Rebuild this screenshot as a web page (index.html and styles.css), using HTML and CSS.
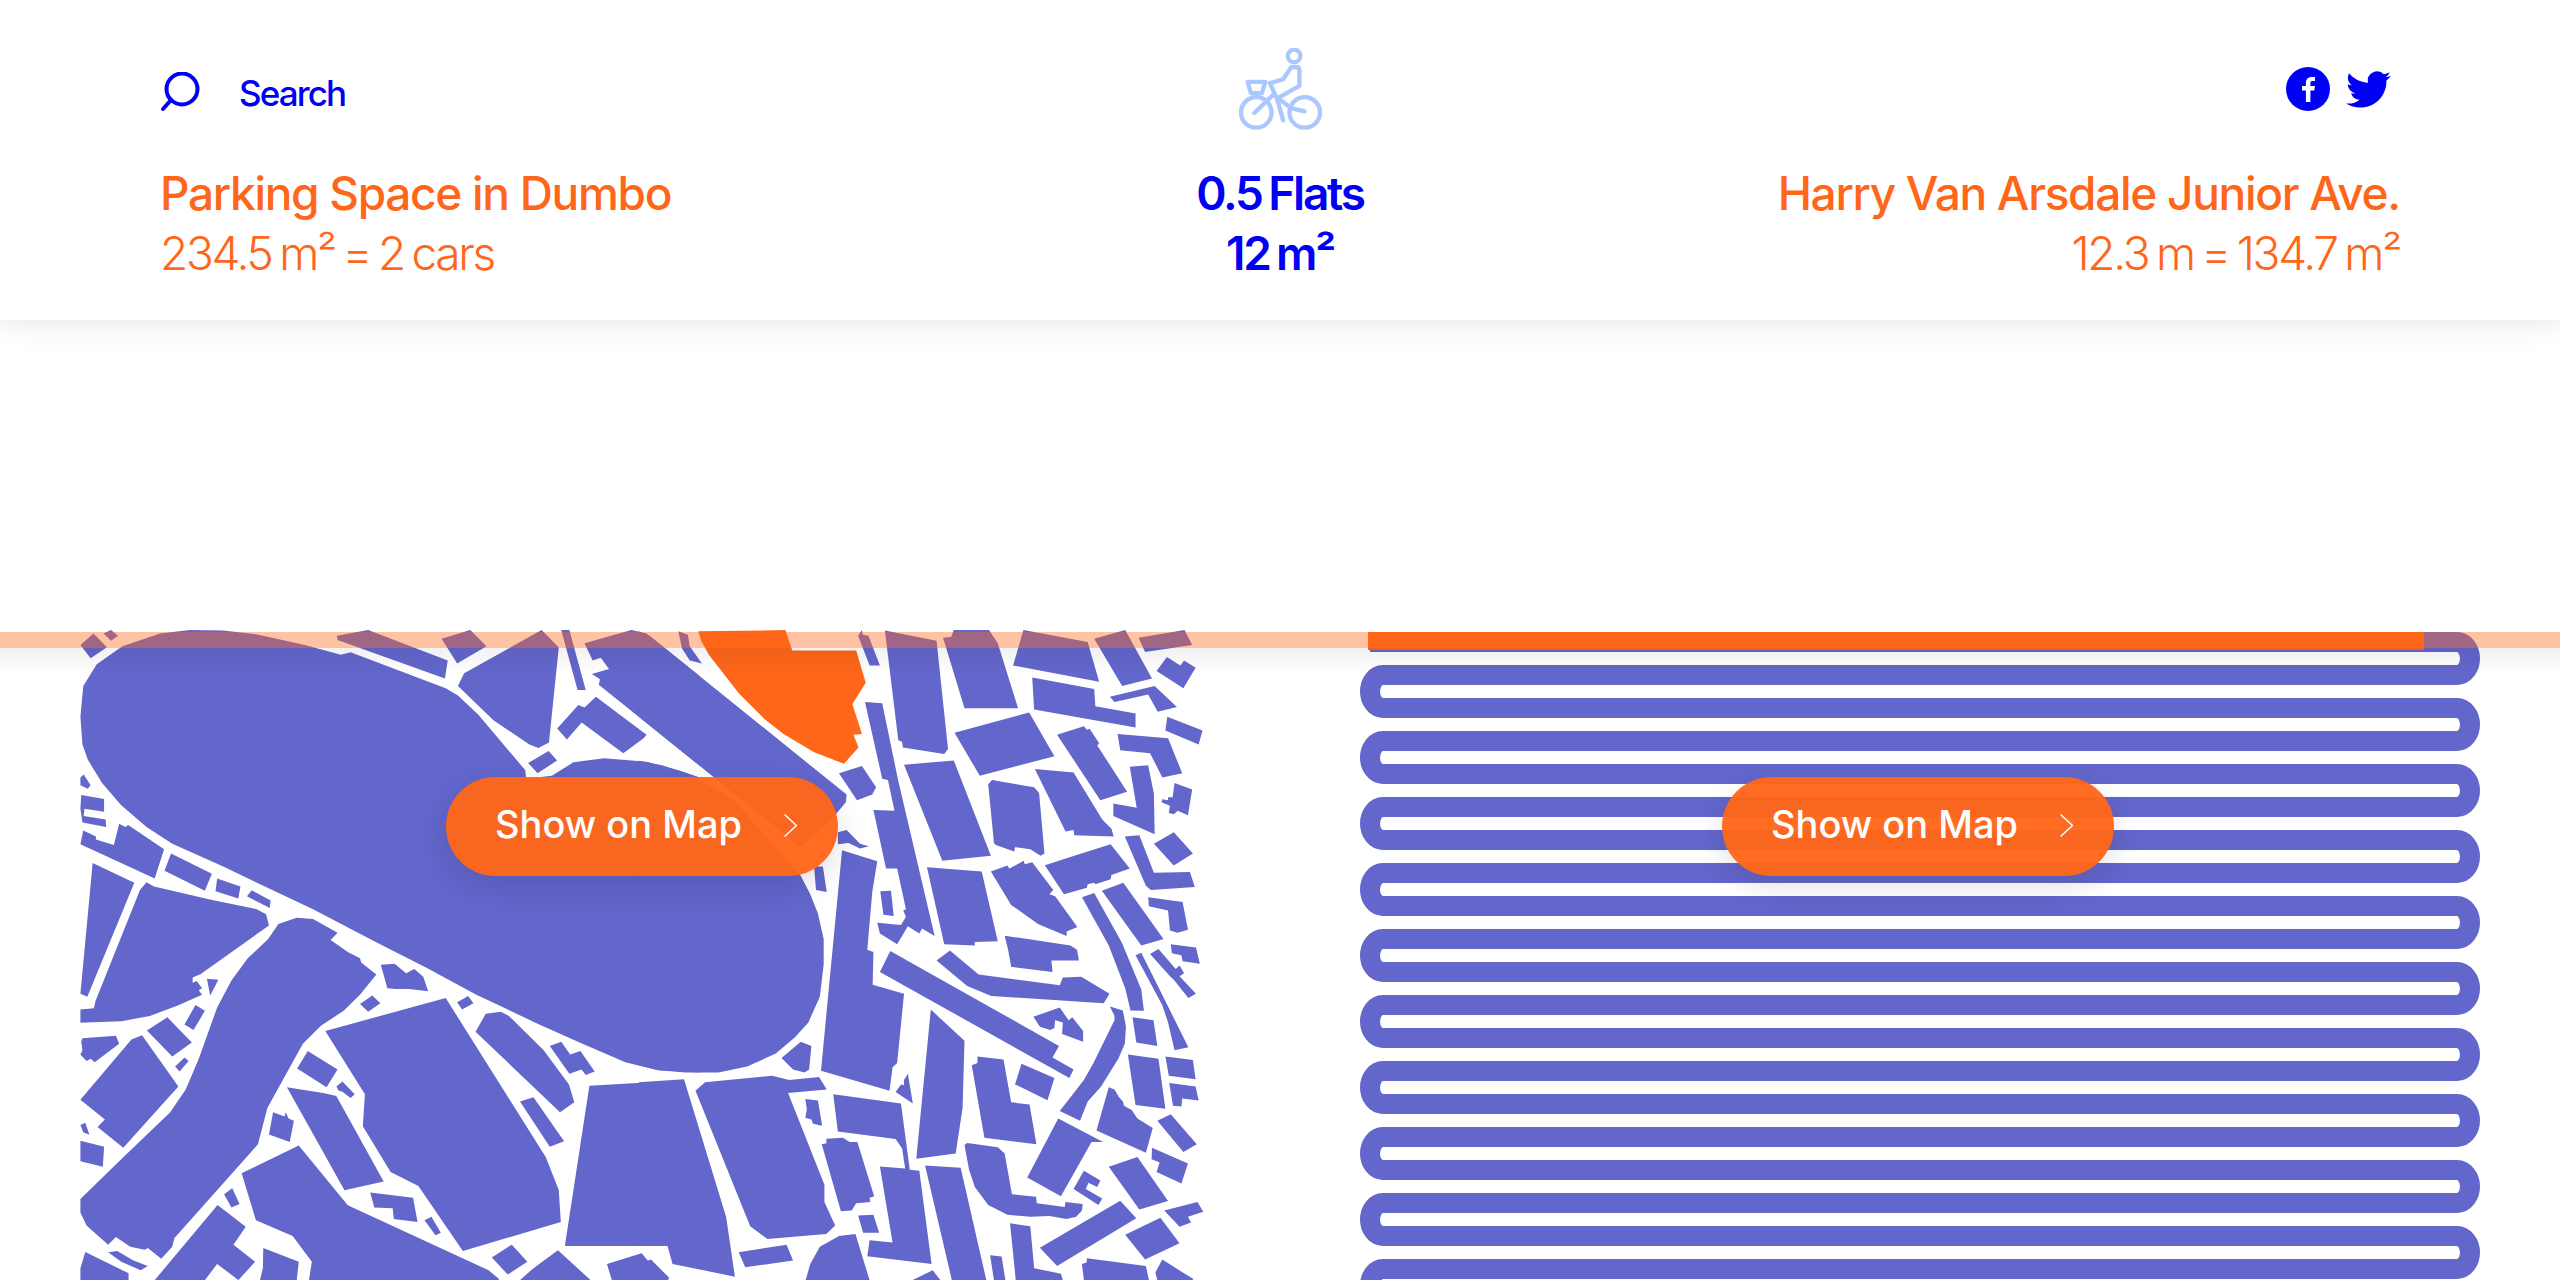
FILE: index.html
```html
<!DOCTYPE html>
<html lang="en">
<head>
<meta charset="utf-8">
<title>Parking Space in Dumbo</title>
<link rel="stylesheet" href="styles.css">
</head>
<body>
<header class="top">
  <div class="tools">
    <a class="search">
      <svg class="search-icon" viewBox="0 0 40 40"><circle cx="22" cy="17" r="15.5"/><path d="M11 28 3 37"/></svg>
      <span class="search-label">Search</span>
    </a>
    <svg class="bike" viewBox="415 55 250 245">
      <circle cx="581" cy="78" r="19"/>
      <circle cx="467" cy="248" r="46"/>
      <circle cx="613" cy="248" r="46"/>
      <path d="M508 160 548 148 572 112H588Q597 112 597 122V168L532 205 572 235 612 245"/>
      <path d="M508 160 530 208 548 272"/>
      <path d="M461 250 518 195"/>
      <path d="M441 156H494L484 190H451Z"/>
    </svg>
    <div class="social">
      <svg class="fb" viewBox="0 0 44 44"><circle cx="22" cy="22" r="22"/><path class="fb-f" d="M24.4 35V23.4h3.9l.6-4.5h-4.5v-2.6c0-1.300.4-2.200 2.200-2.200h2.400v-4c-.4-.1-1.800-.2-3.400-.2-3.400 0-5.700 2.100-5.700 5.900v3.100h-3.900v4.500h3.900V35z"/></svg>
      <svg class="tw" viewBox="0 2 24 20" preserveAspectRatio="none"><path d="M23.953 4.570a10 10 0 01-2.825.775 4.958 4.958 0 002.163-2.723c-.951.555-2.005.959-3.127 1.184a4.920 4.920 0 00-8.384 4.482C7.690 8.095 4.067 6.130 1.640 3.162a4.822 4.822 0 00-.666 2.475c0 1.710.870 3.213 2.188 4.096a4.904 4.904 0 01-2.228-.616v.060a4.923 4.923 0 003.946 4.827 4.996 4.996 0 01-2.212.085 4.936 4.936 0 004.604 3.417 9.867 9.867 0 01-6.102 2.105c-.390 0-.779-.023-1.170-.067a13.995 13.995 0 007.557 2.209c9.053 0 13.998-7.496 13.998-13.985 0-.210 0-.420-.015-.630A9.935 9.935 0 0024 4.590z"/></svg>
    </div>
  </div>
  <div class="facts">
    <div class="fact fact-left"><div class="title">Parking Space in Dumbo</div><div class="sub">234.5 m² = 2 cars</div></div>
    <div class="fact fact-mid"><div class="title">0.5 Flats</div><div class="title">12 m²</div></div>
    <div class="fact fact-right"><div class="title">Harry Van Arsdale Junior Ave.</div><div class="sub">12.3 m = 134.7 m²</div></div>
  </div>
</header>

<main class="panels">
  <section class="panel">
    <svg class="map" viewBox="80 630 1130 650">
      <g transform="translate(60 610) scale(.40816 .42737)">
        <path class="shape" d="M318 47 400 48 480 57 600 82 688 105 712 99 945 183 975 200 1025 245 1140 375 1142 395 1205 388 1258 356 1333 347 1437 355 1515 375 1568 392V1082L1465 1077 1385 1058 1280 1015 1170 968 1020 900 900 838 770 775 620 700 480 637 400 600 275 547 212 508 150 457 103 405 68 350 55 315 50 250 57 178 90 127 153 85 245 55Z
        M1285 78 1400 47 1437 55 1568 155V365L1320 175 1323 162 1303 150 1345 138 1325 112 1305 118Z
        M50 82 82 55 115 87 75 113ZM107 55 125 47 142 60 125 72ZM678 60 755 47 950 118 943 160 680 70ZM935 67 1005 47 1045 85 973 125Z
        M990 148 1180 47 1222 88 1198 310 1172 323 1150 315 1062 258 975 178ZM1228 47H1248L1288 187H1268Z
        M1218 277 1270 222 1285 228 1313 203 1437 292 1430 300 1380 335 1278 263 1242 303ZM1147 358 1197 330 1218 352 1170 382Z
        M50 392 58 385 75 410 68 418 50 410ZM52 433 108 442V472L60 465 58 482 112 490 113 508 55 497 50 465Z
        M57 516 88 530V537L132 550 145 500 160 508 167 503 255 560 232 628 50 548ZM272 570 372 617 355 657 256 610ZM385 628 442 647 437 675 381 658ZM470 656 516 680 514 697 458 670Z
        M80 592 182 638 67 905 50 898Z
        M196 655 212 637 230 647 370 678 482 700 505 712 512 738 345 852 325 860V872L335 868 348 885 340 890 348 900 290 925 220 950 150 962 50 966V935L83 932 87 915Z
        M360 863 388 865 368 902ZM332 924 355 938 327 983 305 970ZM213 984 263 953 323 1012 275 1045ZM282 1068 305 1047 315 1055 293 1080Z
        M55 1002 137 996 145 1015 85 1058 75 1050 65 1055 50 1040 55 1030 52 1010Z
        M50 1146 175 1005 201 995 290 1115 155 1258 92 1210 110 1192Z
        M510 770 535 735 580 720 620 723 680 755 663 772 705 800 735 815 738 825 775 853 735 900 695 938 640 972 595 1015 508 1165 485 1250 280 1470 275 1490 248 1518 215 1493 208 1497 172 1490 137 1467 118 1485 65 1440 50 1410V1378L150 1285 270 1175 308 1122 340 1050 385 930 420 867 460 815Z
        M786 830 820 828 848 850 868 840 890 858 902 892 855 887 822 887 802 885ZM735 922 765 902 785 920 755 940ZM973 918 1000 903 1013 920 985 935Z
        M650 985 945 908 1190 1280 1222 1357 1227 1432 987 1500 878 1348 810 1315 742 1208 747 1133Z
        M1018 987 1043 945 1080 940 1100 950 1185 1030 1247 1110 1260 1152 1225 1175Z
        M1200 1020 1228 1010 1250 1040 1275 1032 1310 1080 1288 1088 1278 1075 1248 1085ZM1127 1150 1160 1140 1235 1243 1200 1256Z
        M607 1032 680 1075 653 1117 581 1073ZM677 1115 692 1103 722 1133 712 1142 692 1127 683 1125Z
        M556 1117 590 1122 645 1130 677 1137 793 1337 697 1358ZM522 1175 550 1185 553 1175 560 1190 573 1195 563 1245 512 1227Z
        M50 1205 62 1200 72 1228 57 1222ZM50 1242 108 1256 105 1303 50 1290Z
        M445 1318 585 1253 705 1393 1050 1545 1075 1565V1568H610L617 1525 570 1465 480 1428Z
        M402 1367 422 1353 440 1390 420 1398ZM760 1363 865 1375 876 1432 818 1425 815 1400 770 1398ZM893 1428 910 1420 933 1457 920 1463Z
        M386 1392 455 1443 425 1485 478 1525 437 1568 385 1530 355 1568H232Z
        M498 1493 585 1525 580 1568H490L497 1540ZM118 1503 140 1500 180 1522 215 1535 198 1545 150 1525ZM62 1502 168 1552V1568H50V1540Z
        M1058 1515 1107 1485 1145 1525 1097 1555ZM1127 1568 1160 1540 1220 1498 1300 1568Z
        M1297 1113 1425 1106V1488H1237ZM1340 1530 1425 1505 1440 1522 1448 1520 1492 1562 1490 1568H1352Z"/>
      </g>
      <g transform="translate(640 610) scale(.38265 .42737)">
        <path class="shape" d="M-3 50 25 60 540 432 538 450 500 490 420 555-3 250Z
        M-3 353 60 364 130 385 240 440 420 622 445 665 465 710 480 770V830L470 905 440 965 405 1000 355 1038 280 1068 205 1082H120L50 1077-3 1065Z
        M100 50 125 58 130 85 162 125 130 118 110 90Z
        M-3 1105 115 1098 225 1420 248 1560 85 1530 72 1488H-3Z
        M520 382 580 365 617 415 607 432 567 445ZM517 520 540 515 575 547 598 553 575 558 545 545 517 548ZM455 600H478L488 660 460 655Z
        M528 562 620 588 607 660 594 795 610 800 608 877 690 898 672 1060 660 1070 652 1125 473 1078Z
        M370 1048 420 1010 448 1020 442 1075 430 1082 400 1075Z
        M145 1125 170 1105 345 1090 390 1100 468 1093 488 1122 387 1130 482 1345V1385L510 1440 487 1460 333 1472 288 1442Z
        M432 1144 465 1148 476 1207 452 1202 448 1192 432 1188 436 1168Z
        M505 1133 682 1155 705 1310 730 1312 762 1530 594 1512 600 1475 660 1480 627 1302 693 1307 685 1260 668 1238 517 1220Z
        M475 1250 487 1248V1237L530 1235 548 1245H568L612 1372 600 1375 602 1385 565 1388 553 1405 525 1407Z
        M570 1417 610 1415 625 1457H583ZM258 1503 383 1485 400 1522 275 1538ZM433 1568 445 1530 470 1490 520 1465 563 1460 600 1568Z
        M640 48 775 72 805 325 795 337 687 322 685 308 675 305ZM570 60 580 47 582 58 597 60 627 130H600Z
        M792 65 813 63 820 47H912L935 78 988 230H848ZM975 130 1002 47 1170 75 1200 168ZM1187 67 1268 47 1338 160 1260 178ZM1303 65 1423 47 1443 82 1320 98Z
        M1350 143 1377 110 1412 130 1422 118 1452 135 1420 183ZM1228 203 1345 178 1403 227 1353 238 1328 198 1240 215Z
        M1025 158 1187 185 1190 225 1295 242V275L1030 233ZM1378 250 1470 282 1460 315 1373 282ZM822 287 1017 240 1083 342 888 388Z
        M1090 292 1160 272 1168 280 1175 278 1200 312 1195 317 1273 425 1203 445ZM1248 290 1380 300 1417 382 1365 392 1333 335 1255 328Z
        M588 215 633 218 675 400 770 763 737 745 730 757 700 740 672 782 627 757 620 732 682 737 695 718 688 703 695 700 672 605H643L610 468 665 470 648 398 633 395Z
        M690 362 820 352 917 575 790 587ZM910 408 920 398 1030 415 1043 428 1057 570 1047 575 1020 560 980 555 978 565 930 550 925 545Z
        M1032 372 1133 380 1208 490 1232 512 1238 530 1135 527 1133 515 1112 518ZM1280 367 1328 363 1343 430 1345 525 1237 482V453L1298 463Z
        M1397 405 1443 420 1432 480 1405 470 1395 478 1382 475 1385 458 1363 450 1365 443 1380 445V438H1392Z
        M1267 530 1305 527 1343 615 1437 613 1450 648 1335 655 1322 645ZM1343 547 1395 520 1445 570 1395 598Z
        M1058 597 1145 572 1230 548 1280 605 1232 620 1230 630 1190 642 1187 638 1170 642 1168 650 1108 665Z
        M750 602 893 612 935 775 875 777V785L795 782ZM917 612 960 598 965 605 1003 587 1005 595 1025 590 1080 655 1070 665 1085 670 1143 742 1115 752V763L1040 735 970 690Z
        M628 658 656 657 663 716 636 713ZM1155 672 1187 662 1260 780 1310 888 1317 938 1282 937 1268 885 1225 785ZM1207 657 1263 638 1368 770 1310 785Z
        M1328 672 1418 683 1432 748 1405 755 1385 750 1380 703 1330 693ZM953 762 1125 785 1142 795 1147 820H1075L1078 847 970 835 962 795Z
        M1387 782 1453 790 1463 828 1418 822 1415 808 1390 803ZM1295 808 1310 802 1433 1023 1397 1030 1380 965 1365 925Z
        M1333 805 1355 793 1400 840 1410 832 1422 850 1410 857 1453 898 1433 908 1395 865 1385 857Z
        M627 847 654 798 1095 1020 1078 1047 1133 1075 1122 1095Z
        M775 820 810 797 885 853 1097 878 1105 860 1153 858 1227 898 1212 920 918 903 855 880Z
        M1028 952 1097 930 1120 960 1130 953 1158 985V1010L1103 992 1105 965 1085 960 1083 978 1072 983 1045 975Z
        M1228 928 1262 937 1270 975 1267 1015 1250 1050 1205 1115 1170 1150 1150 1195 1097 1172 1160 1100 1185 1060 1240 960V950Z
        M1287 953 1342 960 1352 1020 1297 1012ZM760 935 848 1008 843 1165 825 1272 722 1284ZM700 1085 713 1155 668 1128 682 1110 690 1112V1100Z
        M867 1065 882 1060V1045L950 1052 970 1152 1018 1157 1036 1250 900 1235ZM997 1062 1083 1095 1065 1147 980 1110Z
        M1275 1040 1355 1050 1373 1167 1295 1158ZM1373 1045 1445 1053 1452 1098 1382 1090ZM1383 1107 1452 1115 1460 1148 1417 1143 1415 1162 1393 1160Z
        M1225 1117 1240 1122 1252 1140 1262 1150 1265 1160 1285 1170 1300 1190 1340 1212 1322 1270 1193 1218Z
        M1352 1195 1387 1180 1455 1250 1420 1268ZM1093 1190 1210 1245H1180L1100 1372 1012 1328Z
        M848 1252 855 1247 935 1257 953 1272 972 1367 1035 1373 1037 1388 1110 1397 1112 1385 1157 1390 1155 1405 1140 1420 1115 1425 1070 1418 1020 1420 960 1415 910 1392 875 1350 860 1310Z
        M1160 1312 1203 1335 1195 1350 1172 1340 1165 1355 1208 1377 1198 1392 1133 1355ZM1225 1303 1300 1280 1380 1383 1305 1403Z
        M1338 1258 1432 1295 1415 1342 1350 1315 1358 1293 1337 1285ZM1370 1405 1457 1385 1472 1408 1432 1420 1440 1433 1410 1443Z
        M1045 1492 1255 1382 1297 1423 1090 1535ZM1268 1462 1360 1422 1410 1482 1320 1520ZM745 1300 838 1305 905 1568H815Z
        M967 1435 1020 1442 1030 1540 1100 1553 1105 1568H982ZM915 1510 945 1513 955 1568H925ZM1155 1530 1167 1527 1168 1517 1322 1535 1330 1568H1160Z
        M1347 1550 1365 1520 1445 1565V1568H1352ZM712 1568 765 1545 785 1568Z"/>
        <path class="highlight" d="M152 50 380 47 398 95H565L590 170 555 220 580 290 558 292 571 322 533 360 455 333 375 290 325 255 258 195 180 105 160 72Z"/>
      </g>
    </svg>
    <a class="map-button map-button-left"><span class="map-button-label">Show on Map</span><svg class="chevron" viewBox="0 0 13 23"><path d="M.5.5 12.500 11.500.5 22.500"/></svg></a>
  </section>
  <section class="panel">
    <svg class="map" viewBox="1360 630 1120 650">
      <path class="snake" d="M1370 642H2457A13 16.500 0 0 1 2457 675H1383A13 16.500 0 0 0 1383 708H2457A13 16.500 0 0 1 2457 741H1383A13 16.500 0 0 0 1383 774H2457A13 16.500 0 0 1 2457 807H1383A13 16.500 0 0 0 1383 840H2457A13 16.500 0 0 1 2457 873H1383A13 16.500 0 0 0 1383 906H2457A13 16.500 0 0 1 2457 939H1383A13 16.500 0 0 0 1383 972H2457A13 16.500 0 0 1 2457 1005H1383A13 16.500 0 0 0 1383 1038H2457A13 16.500 0 0 1 2457 1071H1383A13 16.500 0 0 0 1383 1104H2457A13 16.500 0 0 1 2457 1137H1383A13 16.500 0 0 0 1383 1170H2457A13 16.500 0 0 1 2457 1203H1383A13 16.500 0 0 0 1383 1236H2457A13 16.500 0 0 1 2457 1269H1383A13 16.500 0 0 0 1383 1302"/>
      <rect class="fill-bar" x="1368" y="632" width="1056" height="18"/>
    </svg>
    <a class="map-button map-button-right"><span class="map-button-label">Show on Map</span><svg class="chevron" viewBox="0 0 13 23"><path d="M.5.5 12.500 11.500.5 22.500"/></svg></a>
  </section>
</main>
<div class="band"></div>
</body>
</html>
```

FILE: styles.css
```css
* { box-sizing: border-box; }
html, body { margin: 0; padding: 0; }
body {
  position: relative;
  width: 2560px;
  height: 1280px;
  overflow: hidden;
  background: #fff;
  font-family: Inter, "Liberation Sans", sans-serif;
}
.top {
  position: relative;
  z-index: 3;
  height: 320px;
  padding: 48px 160px 0;
  background: #fff;
  box-shadow: 0 0 30px rgba(0, 0, 0, .12);
}
.tools {
  display: grid;
  grid-template-columns: 1fr auto 1fr;
  align-items: center;
  height: 82px;
}
.search {
  display: flex;
  align-items: center;
  gap: 39px;
  color: #0000f5;
  font-size: 35px;
  font-weight: 500;
  letter-spacing: -1.900px;
}
.search-label { padding-top: 8px; }
.search-icon {
  width: 40px;
  height: 40px;
  margin-top: 6px;
  fill: none;
  stroke: #0000f5;
  stroke-width: 4px;
  stroke-linecap: round;
}
.bike {
  display: block;
  width: 83px;
  height: 82px;
  fill: none;
  stroke: #aac8ff;
  stroke-width: 13px;
  stroke-linecap: round;
  stroke-linejoin: round;
}
.social {
  display: flex;
  justify-content: flex-end;
  align-items: center;
  gap: 16px;
  padding-right: 9px;
}
.fb { width: 44px; height: 44px; fill: #0000f5; }
.fb-f { fill: #fff; }
.tw { width: 45px; height: 37px; fill: #0000f5; }
.facts {
  display: grid;
  grid-template-columns: 1fr auto 1fr;
  margin-top: 33px;
  line-height: 60px;
  font-size: 46px;
}
.title { font-weight: 500; letter-spacing: -1.300px; }
.sub { font-weight: 300; letter-spacing: -2.300px; word-spacing: -3px; }
.fact-left, .fact-right { color: #ff6619; }
.fact-mid { color: #0000f5; text-align: center; }
.fact-mid .title { font-weight: 600; letter-spacing: -2.200px; word-spacing: -3px; }
.fact-right { text-align: right; }
.panels {
  display: grid;
  grid-template-columns: 1130px 1120px;
  column-gap: 150px;
  padding: 310px 0 0 80px;
}
.panel { position: relative; height: 650px; }
.map { display: block; width: 100%; height: 650px; }
.shape { fill: #6366cb; }
.highlight { fill: #ff6619; }
.snake { fill: none; stroke: #6366cb; stroke-width: 20px; }
.fill-bar { fill: #ff6619; }
.map-button {
  position: absolute;
  top: 147px;
  display: flex;
  align-items: center;
  width: 392px;
  height: 99px;
  padding-left: 49px;
  border-radius: 50px;
  background: rgba(255, 102, 25, .96);
  box-shadow: 0 10px 30px rgba(0, 0, 0, .12);
  color: #fff;
  font-size: 38px;
  font-weight: 500;
}
.map-button-label { padding-bottom: 6px; }
.map-button-left { left: 366px; }
.map-button-right { left: 362px; }
.chevron {
  position: absolute;
  left: 338px;
  top: 37px;
  width: 13px;
  height: 23px;
  fill: none;
  stroke: #fff;
  stroke-width: 1.500px;
}
.band {
  position: absolute;
  z-index: 2;
  top: 632px;
  left: 0;
  width: 100%;
  height: 16px;
  background: rgba(255, 102, 25, .4);
}
.band::after {
  content: "";
  position: absolute;
  top: 100%;
  left: 0;
  width: 100%;
  height: 28px;
  background: linear-gradient(rgba(0, 0, 0, .055), transparent);
}
```
